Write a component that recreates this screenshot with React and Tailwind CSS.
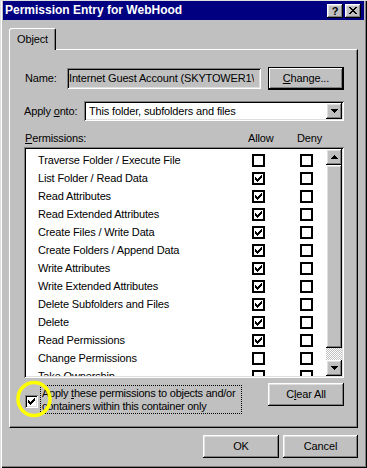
import React from "react";

const raised =
  "shadow-[inset_-1px_-1px_#000,inset_1px_1px_#fff,inset_-2px_-2px_#808080,inset_2px_2px_#dfdfdf]";
const sunken =
  "shadow-[inset_1px_1px_#808080,inset_-1px_-1px_#fff,inset_2px_2px_#000,inset_-2px_-2px_#dfdfdf]";

function Check() {
  return (
    <svg width="7" height="7" viewBox="0 0 7 7" shapeRendering="crispEdges">
      <path
        fill="#000"
        d="M6 0h1v1h-1z M5 1h2v1h-2z M0 2h1v1h-1z M4 2h3v1h-3z M0 3h2v1h-2z M3 3h3v1h-3z M0 4h5v1h-5z M1 5h3v1h-3z M2 6h1v1h-1z"
      />
    </svg>
  );
}

function FlatBox({ checked }) {
  return (
    <div className="w-[13px] h-[13px] shrink-0 border-2 border-black bg-white flex items-center justify-center">
      {checked && <Check />}
    </div>
  );
}

function Arrow({ down }) {
  return (
    <svg width="7" height="4" viewBox="0 0 7 4" shapeRendering="crispEdges">
      <path fill="#000" d={down ? "M0 0h7l-3.5 4z" : "M3.5 0L7 4H0z"} />
    </svg>
  );
}

function Button({ children, className = "" }) {
  return (
    <div
      className={`h-[23px] bg-[#c0c0c0] ${raised} flex items-center justify-center ${className}`}
    >
      {children}
    </div>
  );
}

const rows = [
  ["Traverse Folder / Execute File", false],
  ["List Folder / Read Data", true],
  ["Read Attributes", true],
  ["Read Extended Attributes", true],
  ["Create Files / Write Data", true],
  ["Create Folders / Append Data", true],
  ["Write Attributes", true],
  ["Write Extended Attributes", true],
  ["Delete Subfolders and Files", true],
  ["Delete", true],
  ["Read Permissions", true],
  ["Change Permissions", false],
  ["Take Ownership", false],
];

export default function App() {
  return (
    <div
      className="relative w-[367px] h-[468px] bg-[#c0c0c0] overflow-hidden pt-[1px] text-black text-[11px] tracking-[-0.15px] leading-[13px] shadow-[inset_1px_1px_#dfdfdf,inset_2px_0_#fff,inset_-1px_-1px_#000,inset_-2px_-2px_#808080]"
      style={{ fontFamily: '"Liberation Sans", Arial, sans-serif' }}
    >
      {/* Title bar */}
      <div className="mx-[3px] h-[19px] bg-[#000080] flex items-center pl-[2px] pr-[3px]">
        <span className="text-white font-bold text-[12px] tracking-[0px] flex-1">
          Permission Entry for WebHood
        </span>
        <div className={`w-[16px] h-[14px] bg-[#c0c0c0] ${raised} flex items-center justify-center`}>
          <span className="font-bold text-[11px] leading-none tracking-[0px] mt-[1px]">?</span>
        </div>
        <div className={`ml-[2px] w-[16px] h-[14px] bg-[#c0c0c0] ${raised} flex items-center justify-center`}>
          <svg width="8" height="7" viewBox="0 0 8 7" shapeRendering="crispEdges">
            <path
              fill="#000"
              d="M0 0h2v1h-2z M6 0h2v1h-2z M1 1h2v1h-2z M5 1h2v1h-2z M2 2h4v1h-4z M3 3h2v1h-2z M2 4h4v1h-4z M1 5h2v1h-2z M5 5h2v1h-2z M0 6h2v1h-2z M6 6h2v1h-2z"
            />
          </svg>
        </div>
      </div>

      <div className="px-[9px]">
        {/* Tab */}
        <div className="mt-[8px] relative z-10 -mb-[1px] w-[47px] h-[22px] bg-[#c0c0c0] border-l border-t border-white border-r border-r-black rounded-tl-[3px] rounded-tr-[2px] shadow-[inset_-1px_0_#808080] flex items-center justify-center">
          Object
        </div>

        {/* Panel */}
        <div className="h-[379px] border-l border-t border-white border-r border-b border-r-black border-b-black shadow-[inset_-1px_-1px_#808080] pl-[14px] pr-[13px] flex flex-col">
          {/* Name row */}
          <div className="mt-[17px] h-[23px] flex items-center">
            <span className="w-[43px] pl-[1px]">Name:</span>
            <div className={`w-[194px] h-[21px] ${sunken} bg-[#c0c0c0] flex items-center pl-[2px] pr-[2px] overflow-hidden whitespace-nowrap`}>
              <span className="overflow-hidden">Internet Guest Account (SKYTOWER1\</span>
            </div>
            <div className="ml-[7px] w-[76px] h-[23px] border border-black">
              <div className="w-full h-full bg-[#c0c0c0] shadow-[inset_-1px_-1px_#000,inset_1px_1px_#fff,inset_-2px_-2px_#808080] flex items-center justify-center">
                <span>
                  <u>C</u>hange...
                </span>
              </div>
            </div>
          </div>

          {/* Apply onto row */}
          <div className="mt-[11px] h-[20px] flex items-center">
            <span className="w-[60px]">
              Apply <u>o</u>nto:
            </span>
            <div className={`w-[260px] h-[20px] ${sunken} bg-white flex items-center p-[2px]`}>
              <span className="flex-1 pl-[3px] whitespace-nowrap">This folder, subfolders and files</span>
              <div className={`w-[16px] h-[16px] bg-[#c0c0c0] ${raised} flex items-center justify-center`}>
                <Arrow down />
              </div>
            </div>
          </div>

          {/* Header */}
          <div className="mt-[10px] h-[14px] flex items-center">
            <span className="w-[224px] pl-[1px]">
              <u>P</u>ermissions:
            </span>
            <span className="w-[49px]">Allow</span>
            <span>Deny</span>
          </div>

          {/* List */}
          <div className={`mt-[2px] w-[320px] h-[231px] bg-white ${sunken} p-[2px] flex`}>
            <div className="flex-1 overflow-hidden pt-[2px]">
              {rows.map(([label, allow]) => (
                <div key={label} className="h-[18px] flex items-center">
                  <span className="w-[226px] pl-[12px] whitespace-nowrap">{label}</span>
                  <FlatBox checked={allow} />
                  <div className="ml-[35px]">
                    <FlatBox checked={false} />
                  </div>
                </div>
              ))}
            </div>
            <div className="w-[16px] flex flex-col">
              <div className={`h-[16px] bg-[#c0c0c0] ${raised} flex items-center justify-center`}>
                <Arrow />
              </div>
              <div className={`h-[183px] bg-[#c0c0c0] ${raised}`} />
              <div className="flex-1 bg-[repeating-conic-gradient(#c0c0c0_0_25%,#ffffff_0_50%)] bg-[length:2px_2px]" />
              <div className={`h-[16px] bg-[#c0c0c0] ${raised} flex items-center justify-center`}>
                <Arrow down />
              </div>
            </div>
          </div>

          {/* Bottom row */}
          <div className="mt-[5px] h-[31px] flex items-start">
            <div className={`mt-[12px] ml-[1px] w-[13px] h-[13px] bg-white ${sunken} flex items-center justify-center`}>
              <Check />
            </div>
            <div className="ml-[2px] mt-[2px] w-[202px] h-[29px] border border-dotted border-black pl-[1px] pt-[1px] leading-[13px] whitespace-nowrap tracking-[-0.25px]">
              <div>
                Apply <u>t</u>hese permissions to objects and/or
              </div>
              <div>containers within this container only</div>
            </div>
            <div className="flex-1" />
            <Button className="w-[76px]">
              <span>
                C<u>l</u>ear All
              </span>
            </Button>
          </div>
        </div>

        {/* Bottom buttons */}
        <div className="mt-[7px] flex justify-end gap-[4px]">
          <Button className="w-[76px] h-[22px]">OK</Button>
          <Button className="w-[75px] h-[22px]">Cancel</Button>
        </div>
      </div>

      {/* Yellow annotation circle */}
      <svg className="absolute left-[15px] top-[380px]" width="40" height="40" viewBox="0 0 40 40">
        <ellipse cx="19" cy="19" rx="16" ry="16.5" fill="none" stroke="#ffff00" strokeWidth="3.5" />
      </svg>
    </div>
  );
}
